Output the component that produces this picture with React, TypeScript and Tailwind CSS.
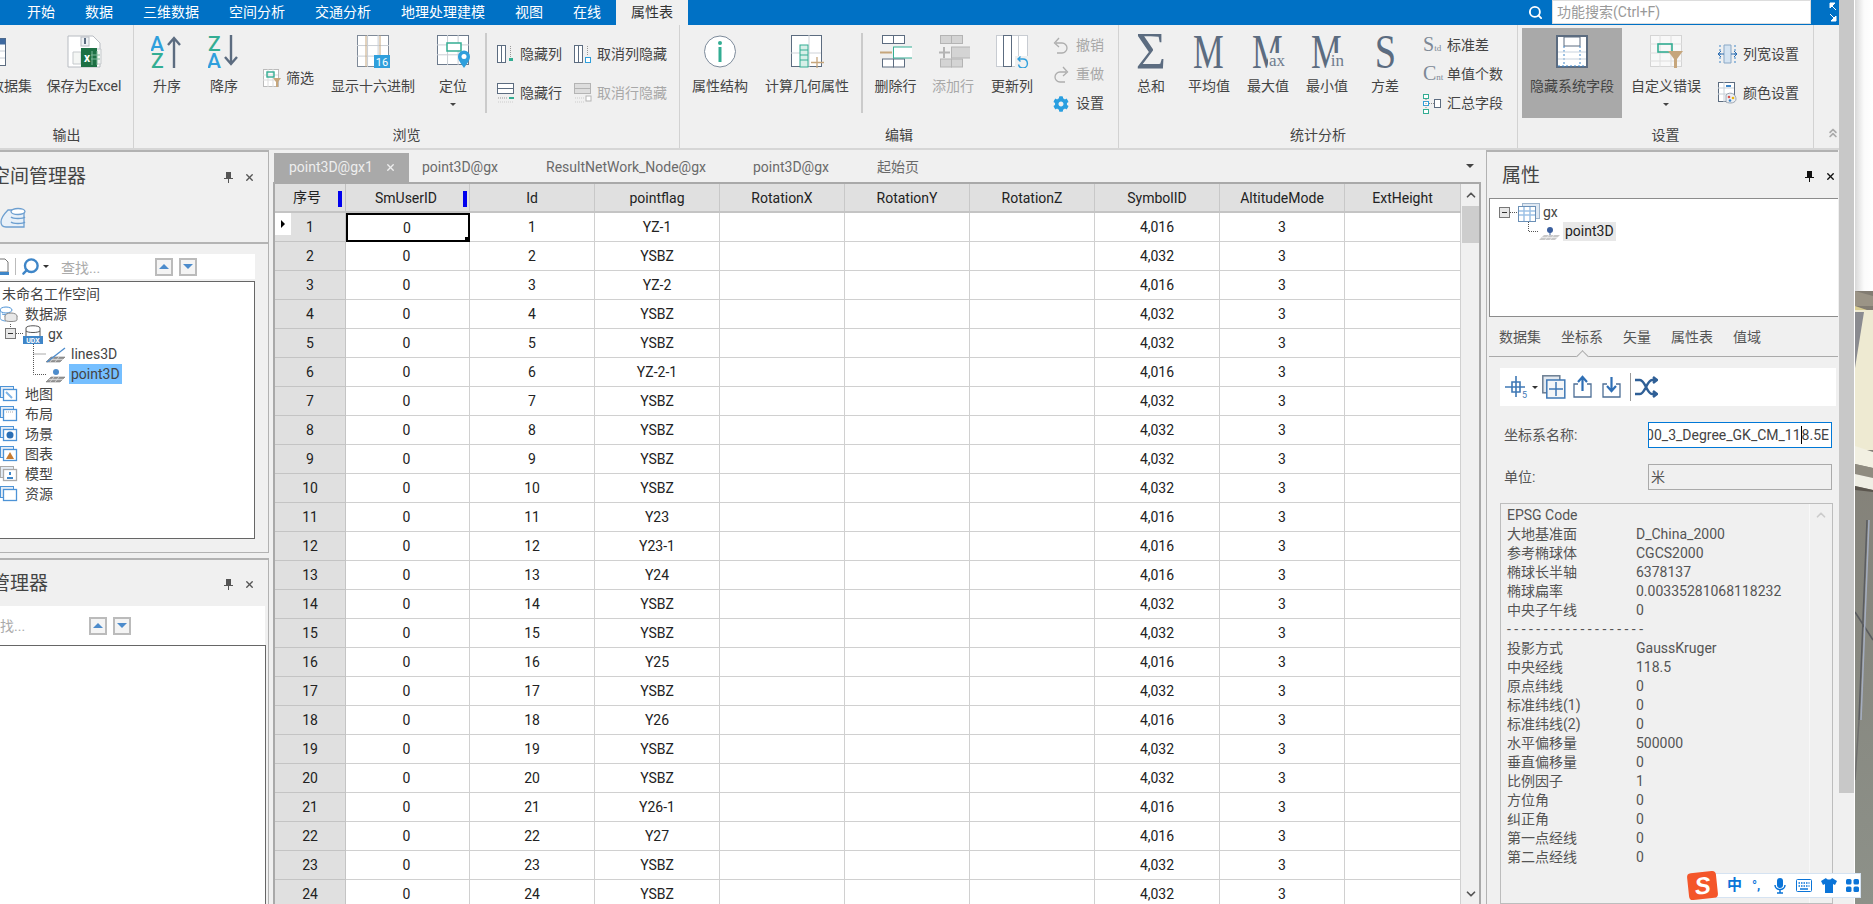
import React from "react";
import { Search, ChevronUp, ChevronDown, ChevronsUp, X } from "lucide-react";
import { FaCog } from "react-icons/fa";

const SL = "#5c6c80";
const TEAL = "#33ad93";
const BLUE = "#2f9fdc";
const TAN = "#c6a67c";
const GR = "#b4b4b4";

/* ---------- ribbon icons ---------- */
function Svg({ w = 33, h = 33, children }: { w?: number; h?: number; children: React.ReactNode }) {
  return (
    <svg width={w} height={h} viewBox={`0 0 ${w} ${h}`} className="block shrink-0" fontFamily="Roboto, sans-serif">
      {children}
    </svg>
  );
}

function TableGrid({ x = 0, y = 0, w = 32, h = 33, c = SL }: { x?: number; y?: number; w?: number; h?: number; c?: string }) {
  return (
    <g fill="none" stroke={c}>
      <rect x={x + 0.5} y={y + 0.5} width={w - 1} height={h - 1} fill="#fff" strokeWidth="1" />
      <path d={`M${x} ${y + h * 0.33}H${x + w}M${x} ${y + h * 0.66}H${x + w}M${x + w * 0.33} ${y}V${y + h}M${x + w * 0.66} ${y}V${y + h}`} stroke="#c9ced4" />
    </g>
  );
}

const IconSaveExcel = () => (
  <Svg w={35}>
    <path d="M1 1H26L33 8V32H1Z" fill="#fff" stroke="#b8bcc2" />
    <rect x="14" y="2" width="8" height="9" fill="#eef1f4" stroke="#b8bcc2" />
    <rect x="17" y="3" width="2" height="6" fill={SL} />
    <path d="M6 17H14V29H6ZM22 14H34V29H22Z" fill="#f4f6f4" stroke="#c5c9cc" />
    <rect x="14" y="13" width="16" height="19" fill="#1d7044" />
    <text x="17" y="27" fontSize="12" fontWeight="700" fill="#fff">x</text>
    <path d="M25 16V30M30 16V30M24 20H33M24 24H33" stroke="#7fb89a" />
  </Svg>
);
const IconAsc = () => (
  <Svg>
    <text x="-1" y="16" fontSize="21" fontWeight="500" fill={BLUE}>A</text>
    <text x="0" y="33" fontSize="21" fontWeight="500" fill={TEAL}>Z</text>
    <path d="M23 33V3M17 10L23 3L29 10" fill="none" stroke={SL} strokeWidth="2.4" />
  </Svg>
);
const IconDesc = () => (
  <Svg>
    <text x="0" y="16" fontSize="21" fontWeight="500" fill={TEAL}>Z</text>
    <text x="-1" y="33" fontSize="21" fontWeight="500" fill={BLUE}>A</text>
    <path d="M23 0V29M17 22L23 29L29 22" fill="none" stroke={SL} strokeWidth="2.4" />
  </Svg>
);
const IconFilter = () => (
  <Svg w={19} h={19}>
    <rect x="0.5" y="0.5" width="15" height="17" fill="#fff" stroke="#bbb" />
    <path d="M0 6H15M0 11H15M5 0V18M10 0V18" stroke="#ddd" />
    <rect x="4" y="3" width="7" height="5" fill="none" stroke={TEAL} strokeWidth="1.4" />
    <path d="M10 9H18L15 13V18H13V13Z" fill={TAN} />
  </Svg>
);
const IconHex = () => (
  <Svg>
    <TableGrid h={32} c="#7f8a98" />
    <path d="M9 0.5V32M23 0.5V32" stroke={TAN} fill="none" />
    <rect x="17" y="20" width="16" height="13" fill={BLUE} />
    <text x="25" y="31" fontSize="11" textAnchor="middle" fill="#fff">16</text>
  </Svg>
);
const IconLocate = () => (
  <Svg>
    <TableGrid h={30} c="#6c7a8c" />
    <rect x="10" y="8" width="14" height="8" fill="#fff" stroke={TEAL} strokeWidth="1.5" />
    <path d="M27 33C23 27 21 25 21 21.500A6 6 0 1 1 33 21.500C33 25 31 27 27 33Z" fill={BLUE} />
    <circle cx="27" cy="21.500" r="2.500" fill="#fff" />
  </Svg>
);
const IconHideCol = ({ off = false }: { off?: boolean }) => (
  <Svg w={19} h={18}>
    <g fill="#fff" stroke={off ? GR : SL}>
      <rect x="0.5" y="0.5" width="4" height="17" />
      <rect x="4.5" y="0.500" width="4" height="17" />
    </g>
    <path d="M13.500 1V12" stroke="#999" strokeDasharray="1 1" />
    <rect x="12" y="13" width="4" height="3" fill={TEAL} />
  </Svg>
);
const IconShowCol = () => (
  <Svg w={19} h={18}>
    <g fill="#fff" stroke={SL}>
      <rect x="0.5" y="0.5" width="4" height="17" />
      <rect x="4.5" y="0.500" width="4" height="17" />
    </g>
    <path d="M13.500 1V11" stroke="#999" strokeDasharray="1 1" />
    <rect x="11.500" y="12.500" width="5" height="5" fill="#fff" stroke={BLUE} />
  </Svg>
);
const IconHideRow = () => (
  <Svg w={19} h={20}>
    <g fill="#fff" stroke={SL}>
      <rect x="0.5" y="0.5" width="16" height="5" />
      <rect x="0.5" y="5.500" width="16" height="5" />
    </g>
    <path d="M1 15H11" stroke="#999" strokeDasharray="1 1" />
    <rect x="12" y="14" width="5" height="2" fill={TEAL} />
    <path d="M1 19H17" stroke="#ccc" strokeDasharray="1 1" />
  </Svg>
);
const IconShowRow = () => (
  <Svg w={19} h={20}>
    <g fill="#ddd" stroke={GR}>
      <rect x="0.5" y="0.5" width="16" height="5" />
      <rect x="0.5" y="5.500" width="16" height="5" />
    </g>
    <path d="M1 15H11" stroke="#ccc" strokeDasharray="1 1" />
    <rect x="12" y="13" width="5" height="5" fill="#fff" stroke={GR} />
    <path d="M1 19H11" stroke="#ccc" strokeDasharray="1 1" />
  </Svg>
);
const IconInfo = () => (
  <Svg>
    <circle cx="16" cy="16.500" r="15.500" fill="#fff" stroke="#7c8a9a" />
    <circle cx="16" cy="8" r="2" fill={TEAL} />
    <rect x="14.500" y="12" width="3" height="15" fill={TEAL} />
  </Svg>
);
const IconCalc = () => (
  <Svg>
    <rect x="0.5" y="0.500" width="30" height="31" fill="#fff" stroke={SL} />
    <path d="M18 0V32M0 18H30" stroke="#cfd3d8" />
    <rect x="9" y="10" width="8" height="22" fill="#d7efe8" stroke={TEAL} />
    <path d="M9 15H17M9 20H17M9 25H17" stroke={TEAL} />
    <path d="M26 22V33M20 27.500H33" stroke={TAN} strokeWidth="1.3" />
  </Svg>
);
const IconDelRow = () => (
  <Svg>
    <g fill="#fff" stroke={SL}>
      <rect x="3.500" y="0.500" width="11" height="8" />
      <rect x="14.500" y="0.500" width="11" height="8" />
      <rect x="3.500" y="24" width="11" height="8" />
      <rect x="14.500" y="24" width="11" height="8" />
    </g>
    <rect x="14.500" y="12" width="20" height="11" fill="#fff" stroke={TEAL} />
    <rect x="1" y="16.500" width="12" height="2" fill={TAN} />
  </Svg>
);
const IconAddRow = () => (
  <Svg>
    <g fill="#d4d4d4" stroke={GR}>
      <rect x="3.500" y="0.500" width="11" height="8" />
      <rect x="14.500" y="0.500" width="11" height="8" />
      <rect x="3.500" y="24" width="11" height="8" />
      <rect x="14.500" y="24" width="11" height="8" />
      <rect x="14.500" y="12" width="20" height="11" />
    </g>
    <path d="M7 12V23M2 17.500H13" stroke={GR} strokeWidth="2" />
  </Svg>
);
const IconUpdate = () => (
  <Svg>
    <rect x="0.5" y="0.500" width="31" height="31" fill="#fff" stroke="#c8ccd2" />
    <rect x="7.500" y="0.500" width="8" height="31" fill="#fff" stroke={SL} />
    <path d="M22.500 0V32" stroke="#c8ccd2" />
    <rect x="19" y="21" width="15" height="12" fill="#f0f0f0" />
    <path d="M22 24H27A4.500 4.500 0 1 1 22.500 29.500M24.500 21.500L22 24L24.500 26.500" fill="none" stroke={BLUE} strokeWidth="1.4" />
  </Svg>
);
const IconUndo = ({ flip = false }: { flip?: boolean }) => (
  <svg width="16" height="17" viewBox="0 0 16 17" className={flip ? "shrink-0 -scale-x-100" : "shrink-0"}>
    <path d="M3 6H9A5 5 0 0 1 9 16H4M6 1L1.500 6L6 10" fill="none" stroke="#adadad" strokeWidth="1.3" />
  </svg>
);
const IconHidden = () => (
  <Svg>
    <rect x="1" y="1" width="30" height="31" fill="#fff" stroke={SL} strokeWidth="2" />
    <rect x="8" y="2" width="16" height="9" fill="#fff" stroke={SL} />
    <path d="M8 11V32M24 11V32" stroke="#3f86c8" strokeDasharray="2 2" />
    <path d="M2 17H30M2 24H30" stroke="#c9d3de" />
    <path d="M2 31H30" stroke="#3f86c8" strokeDasharray="2 2" />
  </Svg>
);
const IconCustom = () => (
  <Svg>
    <rect x="0.5" y="0.500" width="31" height="31" fill="#f8f8f8" stroke="#d4d4d4" />
    <path d="M0 9H32M0 18H32M0 26H32M10 0V32M21 0V32" stroke="#dedede" />
    <rect x="8" y="9" width="14" height="8" fill="none" stroke={TEAL} strokeWidth="1.6" />
    <path d="M18 16H33L27 24V33H24V24Z" fill={TAN} />
  </Svg>
);
const IconColW = () => (
  <Svg w={19} h={20}>
    <path d="M2 1V19M17 1V19" stroke="#3f86c8" strokeDasharray="2 2" />
    <path d="M6 1H13V19H6Z" fill="#d5e4f2" stroke="#8aa8c6" />
    <path d="M0 10H6M13 10H19M3 7L0 10L3 13M16 7L19 10L16 13" fill="none" stroke="#2c6cb0" />
  </Svg>
);
const IconColor = () => (
  <Svg w={19} h={22}>
    <rect x="0.5" y="0.500" width="16" height="19" fill="#fff" stroke={SL} />
    <path d="M6 0V20M0 6H16M0 12H16" stroke="#c8d0d8" />
    <rect x="8" y="3" width="5" height="2" fill="#3f86c8" />
    <path d="M8 13C12 9 18 12 18 17C18 21 12 22 8 20Z" fill="#eceff3" stroke="#9aa5b2" />
    <circle cx="11" cy="15" r="1.300" fill="#d9534f" />
    <circle cx="15" cy="16" r="1.300" fill="#eab308" />
    <circle cx="12" cy="18.500" r="1.300" fill="#3f86c8" />
  </Svg>
);
const IconTree3 = () => (
  <Svg w={18} h={20}>
    <g fill="#fff">
      <rect x="0.500" y="0.500" width="5" height="4" stroke={TEAL} />
      <rect x="0.500" y="7.500" width="5" height="4" stroke={BLUE} />
      <rect x="0.500" y="15.500" width="5" height="4" stroke={TEAL} />
      <rect x="11.500" y="5.500" width="6" height="8" stroke={SL} />
    </g>
    <path d="M3 5V15M6 9.500H11" stroke="#888" strokeDasharray="1 1" />
  </Svg>
);

/* ---------- ribbon building blocks ---------- */
const Serif = "font-['Liberation_Serif',serif]";

function MGlyph({ sub }: { sub?: string }) {
  return (
    <div className={`relative w-[34px] h-[33px] ${Serif} text-[#5c6c80] overflow-hidden`}>
      <span className="absolute left-[1px] top-0 text-[48px] leading-[33px] scale-x-[0.72] origin-left">M</span>
      {sub && <span className="absolute right-0 bottom-0 pl-[1px] bg-[#f0f0f0] text-[17px] leading-[15px] text-[#6e7c8e]">{sub}</span>}
    </div>
  );
}

function BigBtn({ w, label, icon, off, arrow, pl }: { w: string; label: string; icon: React.ReactNode; off?: boolean; arrow?: boolean; pl?: string }) {
  return (
    <div className={`${w} ${pl ?? ""} shrink-0 flex flex-col items-center pt-[10px]`}>
      <div className="h-[33px] flex items-start justify-center">{icon}</div>
      <div className={`mt-[8px] h-[20px] leading-[20px] whitespace-nowrap ${off ? "text-[#a8a8a8]" : "text-[#444]"}`}>{label}</div>
      {arrow && <div className="mt-[7px] w-0 h-0 border-x-[3px] border-x-transparent border-t-[3px] border-t-[#444]" />}
    </div>
  );
}

function SmallBtn({ icon, label, off, w, gap }: { icon: React.ReactNode; label: string; off?: boolean; w: string; gap: string }) {
  return (
    <div className={`flex items-center ${w} ${gap}`}>
      {icon}
      <span className={`whitespace-nowrap ${off ? "text-[#a8a8a8]" : "text-[#444]"}`}>{label}</span>
    </div>
  );
}

function Group({ w, label, children }: { w: string; label: string; children: React.ReactNode }) {
  return (
    <div className={`${w} shrink-0 h-[123px] flex flex-col border-r border-[#d2d2d2]`}>
      <div className="h-[100px] flex">{children}</div>
      <div className="h-[20px] leading-[20px] text-center text-[#444]">{label}</div>
    </div>
  );
}

const VSep = () => <div className="w-[2px] h-[80px] mt-[8px] bg-[#cbcbcb] shrink-0" />;

function Ribbon() {
  return (
    <div className="h-[125px] bg-[#f0f0f0] border-b-2 border-[#d6d6d6] flex text-[14px]">
      <Group w="w-[134px]" label="输出">
        <div className="-ml-[13px] flex">
          <div className="w-[48px] shrink-0 flex flex-col items-center pt-[13px]">
            <div className="h-[30px] -translate-x-[22px]">
              <Svg h={28}>
                <rect x="0.500" y="0.500" width="32" height="27" fill="#fff" stroke={SL} />
                <rect x="0.500" y="0.500" width="32" height="6" fill="#3f6aa0" />
                <path d="M0 13H32M0 20H32M21 6V28" stroke="#c8ced6" />
              </Svg>
            </div>
            <div className="mt-[8px] h-[20px] leading-[20px] whitespace-nowrap text-[#444]">数据集</div>
          </div>
          <BigBtn w="w-[98px]" label="保存为Excel" icon={<IconSaveExcel />} />
        </div>
      </Group>

      <Group w="w-[546px]" label="浏览">
        <BigBtn w="w-[66px]" label="升序" icon={<IconAsc />} />
        <BigBtn w="w-[48px]" label="降序" icon={<IconDesc />} />
        <div className="w-[80px] shrink-0 pl-[15px] pt-[39px] h-[68px] flex items-center gap-[4px] text-[#444]">
          <IconFilter />
          <span className="whitespace-nowrap">筛选</span>
        </div>
        <BigBtn w="w-[90px]" label="显示十六进制" icon={<IconHex />} />
        <BigBtn w="w-[67px]" pl="pl-[3px]" label="定位" arrow icon={<IconLocate />} />
        <VSep />
        <div className="pl-[10px] pt-[14px] flex flex-col gap-[9px]">
          <div className="h-[30px] flex items-center">
            <SmallBtn w="w-[77px]" gap="gap-[4px]" icon={<IconHideCol />} label="隐藏列" />
            <SmallBtn w="w-[100px]" gap="gap-[4px]" icon={<IconShowCol />} label="取消列隐藏" />
          </div>
          <div className="h-[30px] flex items-center">
            <SmallBtn w="w-[77px]" gap="gap-[4px]" icon={<IconHideRow />} label="隐藏行" />
            <SmallBtn w="w-[100px]" gap="gap-[4px]" icon={<IconShowRow />} label="取消行隐藏" off />
          </div>
        </div>
      </Group>

      <Group w="w-[439px]" label="编辑">
        <BigBtn w="w-[80px]" label="属性结构" icon={<IconInfo />} />
        <BigBtn w="w-[94px]" label="计算几何属性" icon={<IconCalc />} />
        <div className="w-[7px] shrink-0" />
        <VSep />
        <BigBtn w="w-[65px]" label="删除行" icon={<IconDelRow />} />
        <BigBtn w="w-[50px]" label="添加行" off icon={<IconAddRow />} />
        <BigBtn w="w-[68px]" label="更新列" icon={<IconUpdate />} />
        <div className="pl-[7px] pt-[6px] flex flex-col">
          <div className="h-[29px] flex items-center"><SmallBtn w="w-[60px]" gap="gap-[7px]" icon={<IconUndo />} label="撤销" off /></div>
          <div className="h-[29px] flex items-center"><SmallBtn w="w-[60px]" gap="gap-[7px]" icon={<IconUndo flip />} label="重做" off /></div>
          <div className="h-[29px] flex items-center"><SmallBtn w="w-[60px]" gap="gap-[7px]" icon={<FaCog className="w-[16px] h-[16px] text-[#2a9fe0]" />} label="设置" /></div>
        </div>
      </Group>

      <Group w="w-[399px]" label="统计分析">
        <BigBtn w="w-[64px]" label="总和" icon={<span className={`${Serif} text-[52px] leading-[33px] text-[#5c6c80]`}>Σ</span>} />
        <BigBtn w="w-[52px]" label="平均值" icon={<MGlyph />} />
        <BigBtn w="w-[66px]" label="最大值" icon={<MGlyph sub="ax" />} />
        <BigBtn w="w-[52px]" label="最小值" icon={<MGlyph sub="in" />} />
        <BigBtn w="w-[64px]" label="方差" icon={<span className={`${Serif} text-[48px] leading-[33px] text-[#5c6c80] inline-block scale-x-[0.8]`}>S</span>} />
        <div className="pl-[6px] pt-[6px] flex flex-col">
          {[
            { k: "S", s: "td", t: "标准差" },
            { k: "C", s: "nt", t: "单值个数" },
          ].map((r) => (
            <div key={r.t} className="h-[29px] flex items-center">
              <span className={`${Serif} w-[24px] text-[#7d8896] text-[20px] leading-[20px]`}>
                {r.k}
                <span className="text-[9px]">{r.s}</span>
              </span>
              <span className="text-[#444] whitespace-nowrap">{r.t}</span>
            </div>
          ))}
          <div className="h-[29px] flex items-center">
            <div className="w-[24px]"><IconTree3 /></div>
            <span className="text-[#444] whitespace-nowrap">汇总字段</span>
          </div>
        </div>
      </Group>

      <Group w="w-[296px]" label="设置">
        <div className="ml-[4px] mt-[3px] w-[100px] h-[90px] shrink-0 bg-[#a9a9a9] flex flex-col items-center pt-[7px]">
          <IconHidden />
          <div className="mt-[8px] h-[20px] leading-[20px] whitespace-nowrap text-[#444]">隐藏系统字段</div>
        </div>
        <BigBtn w="w-[88px]" label="自定义错误" arrow icon={<IconCustom />} />
        <div className="pl-[8px] pt-[14px] flex flex-col gap-[9px]">
          <div className="h-[30px] flex items-center"><SmallBtn w="w-[90px]" gap="gap-[6px]" icon={<IconColW />} label="列宽设置" /></div>
          <div className="h-[30px] flex items-center"><SmallBtn w="w-[90px]" gap="gap-[6px]" icon={<IconColor />} label="颜色设置" /></div>
        </div>
      </Group>

      <div className="flex-1 flex items-end justify-center pb-[8px] pl-[12px]">
        <ChevronsUp className="w-[14px] h-[14px] text-[#aaa]" strokeWidth={3} />
      </div>
    </div>
  );
}

/* ---------- top bar ---------- */
const tabs = [
  { t: "开始", w: "w-[58px]" },
  { t: "数据", w: "w-[58px]" },
  { t: "三维数据", w: "w-[86px]" },
  { t: "空间分析", w: "w-[86px]" },
  { t: "交通分析", w: "w-[86px]" },
  { t: "地理处理建模", w: "w-[114px]" },
  { t: "视图", w: "w-[58px]" },
  { t: "在线", w: "w-[58px]" },
];

function TopBar() {
  return (
    <div className="h-[25px] bg-[#0071c5] flex items-stretch text-[14px] pl-[12px]">
      {tabs.map((t) => (
        <div key={t.t} className={`${t.w} text-center leading-[24px] text-white`}>{t.t}</div>
      ))}
      <div className="w-[72px] bg-[#f0f0f0] text-center leading-[24px] text-[#333]">属性表</div>
      <div className="flex-1 flex justify-end items-center pr-[1px]">
        <Search className="w-[15px] h-[15px] text-white mr-[8px]" strokeWidth={3} />
      </div>
      <div className="w-[259px] h-[24px] bg-white border border-[#ddd] pl-[4px] leading-[22px] text-[#999]">功能搜索(Ctrl+F)</div>
      <div className="w-[28px] flex justify-end pr-[2px]">
        <svg width="8" height="20" viewBox="0 0 8 20" className="mt-[2px]">
          <path d="M1 1H6L1 6ZM7 8L3 4M7 19H2L7 14ZM1 12L5 16" fill="#fff" stroke="#fff" />
        </svg>
      </div>
    </div>
  );
}

/* ---------- shared panel bits ---------- */
const PinIcon = ({ c = "#555" }: { c?: string }) => (
  <svg width="9" height="11" viewBox="0 0 9 11" className="shrink-0">
    <path d="M2 0H7V6H9V7H0V6H2Z" fill={c} />
    <rect x="4" y="7" width="1" height="4" fill={c} />
  </svg>
);

function PanelHead({ title, crop, dark }: { title: string; crop?: boolean; dark?: boolean }) {
  return (
    <div className="flex items-center">
      <span className={`text-[19px] leading-[26px] text-[#444] whitespace-nowrap ${crop ? "-ml-[9px]" : ""}`}>{title}</span>
      <div className="flex-1" />
      <PinIcon c={dark ? "#111" : "#555"} />
      <X className={`w-[11px] h-[11px] ml-[11px] ${dark ? "text-[#111]" : "text-[#555]"}`} strokeWidth={3} />
    </div>
  );
}

function SpinBtn({ down }: { down?: boolean }) {
  return (
    <div className="w-[18px] h-[18px] border-2 border-[#bbb] bg-[#f4f4f4] flex items-center justify-center">
      <div className={`w-0 h-0 border-x-[5px] border-x-transparent ${down ? "border-t-[5px] border-t-[#4d8ccc]" : "border-b-[5px] border-b-[#4d8ccc]"}`} />
    </div>
  );
}

const WinIcon = ({ children, c = "#4d93d6" }: { children?: React.ReactNode; c?: string }) => (
  <svg width="18" height="16" viewBox="0 0 18 16" className="shrink-0">
    <rect x="0.500" y="0.500" width="13" height="11" fill="#e4edf6" stroke={c} />
    <rect x="3.500" y="3.500" width="13" height="11" fill="#fff" stroke={c} strokeWidth="1.300" />
    {children}
  </svg>
);

function TreeRow({ icon, text, sel }: { icon: React.ReactNode; text: string; sel?: boolean }) {
  return (
    <div className="h-[20px] flex items-center text-[#444]">
      {icon}
      <span className={sel ? "bg-[#75bfff] leading-[20px] px-[2px] -ml-[2px]" : ""}>{text}</span>
    </div>
  );
}

const Leaf = ({ point, up }: { point?: boolean; up?: boolean }) => (
  <svg width="71" height="20" viewBox="0 0 71 20" className="shrink-0">
    <path d={up ? "M33.500 0V20M33.500 10H46" : "M33.500 0V10.500H46"} fill="none" stroke="#555" strokeDasharray="1 1" />
    <path d="M51 13H65L60 18H46Z" fill="#9a9a9a" stroke="#666" strokeWidth="0.500" />
    <path d="M49 15.500H63M54 13L50 18M59 13L55 18" stroke="#e8e8e8" strokeWidth="0.700" />
    {point ? <circle cx="56" cy="8" r="3" fill="#4d8ccc" /> : <path d="M47 18L65 4" stroke="#4d8ccc" strokeWidth="1.300" />}
  </svg>
);

function LeftPanels() {
  return (
    <div className="w-[269px] shrink-0 flex flex-col">
      <div className="h-[403px] shrink-0 border-r border-t-2 border-b border-[#b2b2b2] flex flex-col">
        <div className="pr-[13px] pt-[12px]"><PanelHead title="空间管理器" crop /></div>
        <div className="h-[55px] flex items-start pt-[18px] shrink-0 border-b-2 border-[#b4b4b4] -mt-[1px]">
          <svg width="26" height="21" viewBox="0 0 26 21" className="block">
            <path d="M14 3H8C3 8 1 11 1 15C1 18 3 20 6 20H24V4" fill="#e8f0f8" stroke="#6d9fd0" strokeWidth="1.300" />
            <ellipse cx="18" cy="4.500" rx="7" ry="3" fill="#fff" stroke="#6d9fd0" strokeWidth="1.300" />
            <path d="M11 10C13 12 23 12 25 10M11 15C13 17 23 17 25 15" fill="none" stroke="#6d9fd0" strokeWidth="1.300" />
          </svg>
        </div>
        <div className="mt-[10px] w-[255px] h-[25px] bg-white flex items-center shrink-0">
          <svg width="14" height="18" viewBox="0 0 14 18" className="-ml-[5px]">
            <path d="M2 1H10L13 4V14H2Z" fill="#fff" stroke="#777" />
            <rect x="0" y="14" width="14" height="3" fill="#3f86c8" />
          </svg>
          <div className="w-[1px] h-[17px] bg-[#bbb] ml-[6px]" />
          <Search className="w-[19px] h-[19px] ml-[5px] -scale-x-100 text-[#3f86c8]" strokeWidth={3} />
          <div className="ml-[3px] w-0 h-0 border-x-[3px] border-x-transparent border-t-[3px] border-t-[#333]" />
          <span className="ml-[12px] mt-[4px] w-[94px] text-[#aaa]">查找...</span>
          <SpinBtn />
          <div className="w-[6px]" />
          <SpinBtn down />
        </div>
        <div className="mt-[2px] w-[255px] h-[258px] bg-white border-t border-r border-b border-[#666] flex flex-col pt-[2px] shrink-0">
          <div className="h-[20px] flex items-center pl-[2px] text-[#444]">未命名工作空间</div>
          <TreeRow
            text="数据源"
            icon={
              <svg width="25" height="20" viewBox="0 0 25 20" className="shrink-0">
                <ellipse cx="6" cy="6" rx="6" ry="3" fill="#fff" stroke="#4d93d6" />
                <path d="M0 6V14C0 16 4 17 6 17M2 10C4 11 8 11 10 10" fill="none" stroke="#4d93d6" />
                <ellipse cx="11" cy="12" rx="6" ry="3" fill="#e8e8e8" stroke="#888" />
                <path d="M5 12V16C5 18 17 18 17 16V12" fill="#e8e8e8" stroke="#888" />
              </svg>
            }
          />
          <TreeRow
            text="gx"
            icon={
              <svg width="48" height="20" viewBox="0 0 48 20" className="shrink-0">
                <rect x="5.500" y="4.500" width="10" height="10" fill="#e8e8e8" stroke="#777" />
                <path d="M8 9.500H13" stroke="#333" />
                <path d="M10.500 0V4M16 9.500H23" stroke="#555" strokeDasharray="1 1" />
                <path d="M26 4C26 1 40 1 40 4V13H26Z" fill="#fff" stroke="#555" />
                <path d="M26 7C28 9 38 9 40 7" fill="none" stroke="#555" />
                <rect x="23" y="12" width="20" height="8" fill="#3f86c8" />
                <text x="33" y="19" fontSize="7" textAnchor="middle" fill="#fff" fontWeight="700">UDX</text>
              </svg>
            }
          />
          <TreeRow text="lines3D" icon={<Leaf up />} />
          <TreeRow text="point3D" sel icon={<Leaf point />} />
          {["地图", "布局", "场景", "图表", "模型", "资源"].map((t, i) => (
            <TreeRow
              key={t}
              text={t}
              icon={
                <div className="w-[25px] shrink-0">
                  <WinIcon c={t === "模型" ? "#aaa" : "#4d93d6"}>
                    {i === 2 && <circle cx="10" cy="9" r="3.500" fill="#2b6fb5" />}
                    {i === 3 && <path d="M6 13H14L10 6Z" fill="#c77b30" />}
                    {i === 1 && <path d="M6 6H14" stroke="#aaa" strokeDasharray="1 1" />}
                    {i === 4 && <path d="M10 6V9M7 12H13" stroke="#3f86c8" strokeWidth="2" />}
                    {i === 0 && <path d="M6 6L12 12" stroke="#7fb4e6" strokeWidth="2" />}
                  </WinIcon>
                </div>
              }
            />
          ))}
        </div>
      </div>
      <div className="h-[5px] shrink-0" />
      <div className="flex-1 border-r border-t-2 border-[#b2b2b2] flex flex-col min-h-0">
        <div className="pr-[13px] pt-[11px]"><PanelHead title="管理器" crop /></div>
        <div className="mt-[9px] w-[265px] h-[39px] bg-white flex items-center shrink-0">
          <span className="-ml-[14px] mt-[2px] w-[103px] text-[#aaa]">查找...</span>
          <SpinBtn />
          <div className="w-[6px]" />
          <SpinBtn down />
        </div>
        <div className="w-[266px] flex-1 bg-white border-t border-r border-[#666]" />
      </div>
    </div>
  );
}

/* ---------- attribute table ---------- */
const flags = ["YZ-1", "YSBZ", "YZ-2", "YSBZ", "YSBZ", "YZ-2-1", "YSBZ", "YSBZ", "YSBZ", "YSBZ", "Y23", "Y23-1", "Y24", "YSBZ", "YSBZ", "Y25", "YSBZ", "Y26", "YSBZ", "YSBZ", "Y26-1", "Y27", "YSBZ", "YSBZ"];
const cols = [
  { n: "SmUserID", w: "w-[124px]" },
  { n: "Id", w: "w-[125px]" },
  { n: "pointflag", w: "w-[125px]" },
  { n: "RotationX", w: "w-[125px]" },
  { n: "RotationY", w: "w-[125px]" },
  { n: "RotationZ", w: "w-[125px]" },
  { n: "SymbolID", w: "w-[125px]" },
  { n: "AltitudeMode", w: "w-[125px]" },
  { n: "ExtHeight", w: "w-[116px]" },
];

function AttrTable() {
  return (
    <div className="w-[1208px] shrink-0 flex flex-col ml-[4px] min-h-0">
      <div className="h-[32px] shrink-0 flex items-end text-[14px] text-[#6a6a6a] relative">
        <div className="w-[135px] ml-[1px] h-[29px] bg-[#a9a9a9] text-[#eee] flex items-center pl-[15px] shrink-0">
          point3D@gx1
          <X className="w-[11px] h-[11px] ml-[12px]" strokeWidth={3} />
        </div>
        <div className="w-[137px] pl-[13px] h-[29px] leading-[28px] shrink-0">point3D@gx</div>
        <div className="w-[207px] h-[29px] leading-[28px] shrink-0">ResultNetWork_Node@gx</div>
        <div className="w-[124px] h-[29px] leading-[28px] shrink-0">point3D@gx</div>
        <div className="h-[29px] leading-[28px] shrink-0">起始页</div>
        <div className="flex-1" />
        <div className="mb-[14px] mr-[7px] w-0 h-0 border-x-[4px] border-x-transparent border-t-[4px] border-t-[#444]" />
      </div>
      <div className="flex-1 min-h-0 flex border-l-2 border-r-2 border-t-2 border-[#a9a9a9] text-[14px] text-[#222] overflow-hidden bg-white">
        <div className="w-[1186px] shrink-0 flex flex-col">
          <div className="h-[29px] shrink-0 flex bg-[#e0e0e0] border-b-2 border-[#c4c4c4]">
            <div className="w-[71px] shrink-0 border-r border-[#c0c0c0] flex items-center justify-center relative pr-[6px]">
              序号
              <div className="absolute right-[3px] top-[7px] w-[4px] h-[16px] bg-[#0000ee]" />
            </div>
            {cols.map((c, i) => (
              <div key={c.n} className={`${c.w} shrink-0 border-r border-[#c8c8c8] flex items-center justify-center relative pt-[1px] ${i === 0 ? "pr-[3px]" : ""}`}>
                {c.n}
                {i === 0 && <div className="absolute right-[2px] top-[7px] w-[4px] h-[16px] bg-[#0000ee]" />}
              </div>
            ))}
          </div>
          {flags.map((f, i) => (
            <div key={i} className="h-[29px] shrink-0 flex">
              <div className="w-[71px] shrink-0 bg-[#e0e0e0] border-r border-b border-[#c4c4c4] flex items-center justify-center relative pt-[1px]">
                {i === 0 && (
                  <div className="absolute left-0 top-0 w-[16px] h-[22px] bg-white flex items-center justify-center">
                    <div className="w-0 h-0 border-y-[4px] border-y-transparent border-l-[4px] border-l-black" />
                  </div>
                )}
                {i + 1}
              </div>
              {cols.map((c, j) => {
                const val = j === 0 ? "0" : j === 1 ? String(i + 1) : j === 2 ? f : j === 6 ? (f === "YSBZ" ? "4,032" : "4,016") : j === 7 ? "3" : "";
                const focus = i === 0 && j === 0;
                return (
                  <div key={c.n} className={`${c.w} shrink-0 flex items-center justify-center relative pt-[1px] ${j === 0 ? "pr-[2px]" : ""} ${focus ? "border-2 border-black" : "border-r border-b border-[#d0d0d0]"}`}>
                    {val}
                    {focus && <div className="absolute -right-[2px] -bottom-[2px] w-[5px] h-[5px] bg-black" />}
                  </div>
                );
              })}
            </div>
          ))}
        </div>
        <div className="w-[20px] bg-[#f0f0f0] flex flex-col items-center shrink-0">
          <div className="h-[22px] flex items-center"><ChevronUp className="w-[14px] h-[14px] text-[#555]" strokeWidth={3} /></div>
          <div className="w-[19px] h-[37px] bg-[#cdcdcd]" />
          <div className="flex-1" />
          <div className="h-[20px] flex items-center"><ChevronDown className="w-[14px] h-[14px] text-[#555]" strokeWidth={3} /></div>
        </div>
      </div>
    </div>
  );
}

/* ---------- properties panel ---------- */
const props: [string, string][] = [
  ["EPSG Code", ""],
  ["大地基准面", "D_China_2000"],
  ["参考椭球体", "CGCS2000"],
  ["椭球长半轴", "6378137"],
  ["椭球扁率", "0.00335281068118232"],
  ["中央子午线", "0"],
  ["- - - - - - - - - - - - - - - - - - -", ""],
  ["投影方式", "GaussKruger"],
  ["中央经线", "118.5"],
  ["原点纬线", "0"],
  ["标准纬线(1)", "0"],
  ["标准纬线(2)", "0"],
  ["水平偏移量", "500000"],
  ["垂直偏移量", "0"],
  ["比例因子", "1"],
  ["方位角", "0"],
  ["纠正角", "0"],
  ["第一点经线", "0"],
  ["第二点经线", "0"],
];

function RightPanel() {
  return (
    <div className="w-[352px] shrink-0 ml-[5px] border-l border-t-2 border-[#b2b2b2] flex flex-col text-[14px] text-[#555] min-h-0">
      <div className="pl-[15px] pr-[2px] pt-[11px] h-[46px] shrink-0"><PanelHead title="属性" dark /></div>
      <div className="ml-[2px] h-[119px] shrink-0 bg-white border-t border-l border-b border-[#8c8c8c] pt-[4px]">
        <div className="h-[19px] flex items-center text-[#444]">
          <svg width="52" height="19" viewBox="0 0 52 19" className="shrink-0">
            <rect x="9.500" y="4.500" width="10" height="10" fill="#e8e8e8" stroke="#777" />
            <path d="M12 9.500H17" stroke="#333" />
            <path d="M20 9.500H27" stroke="#555" strokeDasharray="1 1" />
            <rect x="32.500" y="0.500" width="17" height="15" fill="#dfe8f2" stroke="#9db4cc" />
            <rect x="28.500" y="3.500" width="17" height="15" fill="#fff" stroke="#6a8fb6" />
            <path d="M29 8H45M29 12H45M34 4V18M40 4V18" stroke="#9ec2e6" strokeWidth="1.500" />
          </svg>
          <span className="ml-[1px]">gx</span>
        </div>
        <div className="h-[19px] flex items-center text-[#222]">
          <svg width="75" height="19" viewBox="0 0 75 19" className="shrink-0">
            <path d="M38.500 0V9.500H49" fill="none" stroke="#555" strokeDasharray="1 1" />
            <path d="M54 13H70L65 18H49Z" fill="#c8c8c8" />
            <path d="M52 15.500H68M59 13L55 18M64 13L60 18" stroke="#f4f4f4" strokeWidth="0.700" />
            <circle cx="60" cy="8" r="3" fill="#3a5f9e" />
            <path d="M60 8V13" stroke="#3a5f9e" />
          </svg>
          <span className="bg-[#e8e8e8] leading-[19px] px-[2px] -ml-[2px]">point3D</span>
        </div>
      </div>
      <div className="h-[40px] shrink-0 ml-[2px] border-b border-[#aaa] flex items-center pt-[1px] pl-[10px] relative">
        <span className="w-[62px]">数据集</span>
        <span className="w-[62px]">坐标系</span>
        <span className="w-[48px]">矢量</span>
        <span className="w-[62px]">属性表</span>
        <span>值域</span>
        <div className="absolute left-[89px] -bottom-[5px] w-[9px] h-[9px] rotate-45 bg-[#f0f0f0] border-l border-t border-[#aaa]" />
      </div>
      <div className="mt-[11px] ml-[13px] w-[336px] h-[38px] shrink-0 bg-white flex items-center pl-[3px]">
        <svg width="32" height="24" viewBox="0 0 32 24">
          <path d="M13 1V22M2 12H22M9 7H17V17H9Z" fill="none" stroke="#3f78b5" strokeWidth="1.600" />
          <text x="19" y="23" fontSize="9" fill="#3f78b5">5</text>
        </svg>
        <div className="-ml-[3px] w-0 h-0 border-x-[3px] border-x-transparent border-t-[3px] border-t-[#333]" />
        <svg width="24" height="24" viewBox="0 0 24 24" className="ml-[4px]">
          <rect x="0.800" y="0.800" width="17" height="17" fill="#e2e8ef" stroke="#6a7d92" strokeWidth="1.500" />
          <rect x="4.800" y="5" width="18" height="18" fill="#f4f6f8" stroke="#3f78b5" strokeWidth="1.500" />
          <path d="M14 7V21M7 14H21" stroke="#3f78b5" strokeWidth="1.500" />
        </svg>
        <svg width="20" height="24" viewBox="0 0 20 24" className="ml-[7px]">
          <path d="M5 9H1V22H18V9H14" fill="none" stroke="#4d6f96" strokeWidth="1.300" />
          <path d="M9.500 16V3M5 7L9.500 2L14 7" fill="none" stroke="#2f6fb5" strokeWidth="2.200" />
        </svg>
        <svg width="20" height="24" viewBox="0 0 20 24" className="ml-[9px]">
          <path d="M5 9H1V22H18V9H14" fill="none" stroke="#4d6f96" strokeWidth="1.300" />
          <path d="M9.500 2V15M5 11L9.500 16L14 11" fill="none" stroke="#2f6fb5" strokeWidth="2.200" />
        </svg>
        <div className="w-[1px] h-[28px] bg-[#999] ml-[8px]" />
        <svg width="24" height="22" viewBox="0 0 24 22" className="ml-[3px]">
          <path d="M1 4H6C11 4 13 18 18 18H22M1 18H6C11 18 13 4 18 4H22M19 1L23 4L19 7M19 15L23 18L19 21" fill="none" stroke="#2f5f96" strokeWidth="2.500" />
        </svg>
      </div>
      <div className="mt-[16px] h-[26px] shrink-0 flex items-center pl-[17px]">
        <span className="w-[144px]">坐标系名称:</span>
        <div className="w-[184px] h-[26px] border border-[#0078d7] bg-white flex justify-end items-center overflow-hidden pr-[2px] text-[#444] whitespace-nowrap">
          CGCS_2000_3_Degree_GK_CM_11
          <span className="inline-block w-0 h-[18px] border-l border-black" />
          8.5E
        </div>
      </div>
      <div className="mt-[16px] h-[26px] shrink-0 flex items-center pl-[17px]">
        <span className="w-[144px]">单位:</span>
        <div className="w-[184px] h-[26px] border border-[#aaa] pl-[2px] leading-[24px]">米</div>
      </div>
      <div className="mt-[13px] ml-[13px] w-[333px] flex-1 min-h-0 border border-[#bdbdbd] flex">
        <div className="w-[309px] pl-[6px] pt-[2px] border-r border-[#f8f8f8]">
          {props.map(([k, v]) => (
            <div key={k} className="h-[19px] leading-[19px] flex text-[#555]">
              <span className="w-[129px] shrink-0 whitespace-nowrap">{k}</span>
              <span className="whitespace-nowrap">{v}</span>
            </div>
          ))}
        </div>
        <div className="flex-1 flex flex-col items-center pt-[4px]">
          <ChevronUp className="w-[14px] h-[14px] text-[#ccc]" strokeWidth={3} />
        </div>
      </div>
    </div>
  );
}

function Desktop() {
  return (
    <svg width="18" height="904" viewBox="0 0 18 904" className="block" preserveAspectRatio="none">
      <defs>
        <linearGradient id="sh" x1="0" x2="1">
          <stop offset="0" stopColor="#d8d8d8" />
          <stop offset="0.5" stopColor="#fbfbfb" />
          <stop offset="1" stopColor="#fff" />
        </linearGradient>
        <linearGradient id="fl" x1="0" y1="0" x2="0" y2="1">
          <stop offset="0" stopColor="#827c72" />
          <stop offset="0.5" stopColor="#86867e" />
          <stop offset="1" stopColor="#8d9189" />
        </linearGradient>
      </defs>
      <rect width="18" height="291" fill="url(#sh)" />
      <rect y="291" width="18" height="613" fill="url(#fl)" />
      <path d="M0 291L18 296V306L0 306Z" fill="#9b9486" />
      <path d="M0 306L18 312V316L0 310Z" fill="#d9cd92" />
      <path d="M0 310H18V450H0Z" fill="#eeead2" />
      <path d="M0 312H9L0 368Z" fill="#8a8b90" />
      <path d="M0 446L18 452V468L0 464Z" fill="#f2f0e2" />
      <path d="M0 464L18 468V478L0 474Z" fill="#8f8b80" />
      <path d="M0 474L18 478V490L0 486Z" fill="#efeee4" />
      <path d="M0 486L18 490V492L0 490Z" fill="#5b564e" />
      <path d="M12 520L4 720M0 612L18 640" stroke="#5a5c60" fill="none" strokeWidth="1.500" />
      <path d="M14 520L6 720" stroke="#a4adc0" fill="none" strokeWidth="1.500" />
      <path d="M4 720L0 780" stroke="#6f6f6e" fill="none" strokeWidth="1.500" />
    </svg>
  );
}

function ImeBar() {
  return (
    <div className="absolute left-[1688px] top-[872px] flex items-center">
      <div className="w-[29px] h-[27px] -rotate-6 rounded-[4px] bg-[#f4562a] text-white font-black italic text-[24px] leading-[27px] text-center font-['Liberation_Sans',sans-serif] z-10">S</div>
      <div className="w-[146px] h-[25px] -ml-[2px] bg-white border border-[#d5e3f2] flex items-center text-[#0a74d8]">
        <span className="ml-[11px] w-[22px] text-[15px] font-bold leading-none">中</span>
        <span className="ml-[3px] w-[19px] text-[13px] font-bold leading-none">°,</span>
        <svg width="14" height="16" viewBox="0 0 14 16" className="ml-[2px]"><rect x="4" y="0" width="6" height="10" rx="3" fill="currentColor" /><path d="M2 7C2 13 12 13 12 7M7 12V15M4 15H10" stroke="currentColor" fill="none" strokeWidth="1.500" /></svg>
        <svg width="16" height="13" viewBox="0 0 16 13" className="ml-[9px]"><rect x="0.500" y="0.500" width="15" height="12" rx="1" fill="#fff" stroke="currentColor" /><path d="M2.500 4H13.500M2.500 7H13.500" stroke="currentColor" strokeWidth="1.500" strokeDasharray="1.500 1" /><path d="M4 10H12" stroke="currentColor" strokeWidth="1.500" /></svg>
        <svg width="16" height="15" viewBox="0 0 16 15" className="ml-[9px]"><path d="M5 0L0 3L2 7L4 6V15H12V6L14 7L16 3L11 0C10 2 6 2 5 0Z" fill="currentColor" /></svg>
        <svg width="13" height="13" viewBox="0 0 13 13" className="ml-[9px]"><rect width="5.500" height="5.500" rx="1.500" fill="currentColor" /><rect x="7.500" width="5.500" height="5.500" rx="1.500" fill="currentColor" /><rect y="7.500" width="5.500" height="5.500" rx="1.500" fill="currentColor" /><rect x="7.500" y="7.500" width="5.500" height="5.500" rx="1.500" fill="currentColor" /></svg>
      </div>
    </div>
  );
}

export default function App() {
  return (
    <div className="relative w-[1873px] h-[904px] overflow-hidden flex bg-[#f0f0f0] font-['Roboto','Noto_Sans_CJK_SC',sans-serif] text-[14px]">
      <div className="w-[1839px] shrink-0 h-full flex flex-col">
        <TopBar />
        <Ribbon />
        <div className="flex-1 min-h-0 flex">
          <LeftPanels />
          <AttrTable />
          <RightPanel />
        </div>
      </div>
      <div className="w-[15px] shrink-0 h-full flex flex-col">
        <div className="h-[793px] bg-[#c8c8c8]" />
        <div className="flex-1 bg-[#f0f0f0]" />
      </div>
      <div className="w-[1px] bg-white" />
      <Desktop />
      <ImeBar />
    </div>
  );
}
